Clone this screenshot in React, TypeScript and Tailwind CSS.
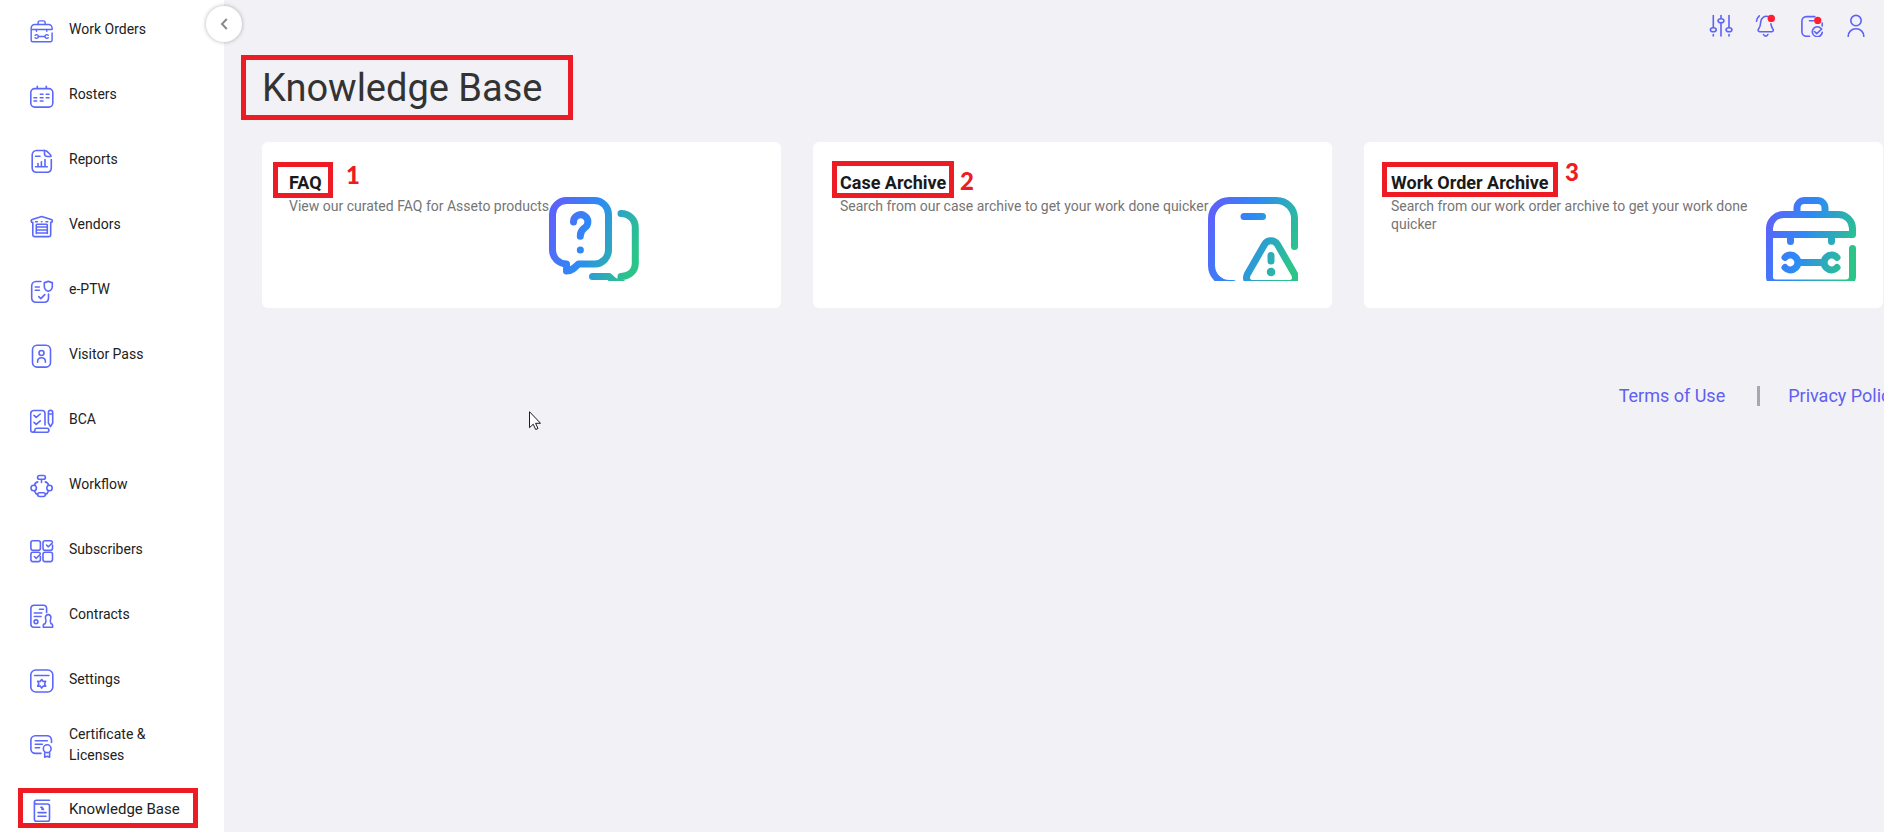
import React from 'react';
import clsx from 'clsx';

type NavItem = {
  label: string;
  icon: React.ReactNode;
  active?: boolean;
};

type ArchiveCard = {
  title: string;
  text: string;
  icon: React.ReactNode;
  step: number;
  boxClass: string;
  stepClass: string;
};

function ToolboxShape() {
  return (
    <>
      <path d="M31 17.5V11a7.5 7.5 0 0 1 7.5-7.5h13A7.5 7.5 0 0 1 59 11v6.5" />
      <path d="M3.5 37.5h83v-6a14 14 0 0 0-14-14h-55a14 14 0 0 0-14 14V80a6 6 0 0 0 6 6H80a6.5 6.5 0 0 0 6.5-6.5v-28" />
      <path d="M24.5 38v6.5M65.5 38v6.5M33 65.5h24" />
      <path d="M19 60.5a7.4 7.4 0 1 1 0 10M71 60.5a7.4 7.4 0 1 0 0 10" />
    </>
  );
}

function NavIcon({ children }: { children: React.ReactNode }) {
  return (
    <svg
      viewBox="0 0 24 24"
      className="w-6 h-6 shrink-0"
      fill="none"
      stroke="#5b68fa"
      strokeWidth={1.6}
      strokeLinecap="round"
      strokeLinejoin="round"
      aria-hidden="true"
    >
      {children}
    </svg>
  );
}

const navItems: NavItem[] = [
  {
    label: 'Work Orders',
    icon: (
      <g transform="translate(0.3 1) scale(0.252)" strokeWidth={5.8}>
        <ToolboxShape />
      </g>
    ),
  },
  {
    label: 'Rosters',
    icon: (
      <>
        <rect x="0.8" y="4.6" width="22" height="18.5" rx="4" />
        <path d="M7.3 2.3v2M16.3 2.3v2M10.3 10.3H13M16.3 10.3H19M4 13.7h2.7M10.3 13.7H13M16.3 13.7H19M4 17h2.7M10.3 17H13" />
      </>
    ),
  },
  {
    label: 'Reports',
    icon: (
      <>
        <path d="M14.5 1.5H6.5A4.500 4.500 0 0 0 2.200 6v13a4.500 4.500 0 0 0 4.300 4.300H17a4.500 4.500 0 0 0 4.300-4.300v-8.500" />
        <path d="M14.5 1.5v3a3 3 0 0 0 3 3H21c0-1-.4-1.600-1-2.200L17 2.400c-.7-.6-1.500-.9-2.500-.9zM5.600 7.300H10M5.600 17.700h11.700M8 17.500V14.600M11.400 17.500v-4.800M15 17.500v-7" />
      </>
    ),
  },
  {
    label: 'Vendors',
    icon: (
      <>
        <path d="M11.7 2.5 2.2 5.600c-.8.300-1.200 1.100-.9 1.900.2.700.8 1 1.500.9V21c0 1 .6 1.600 1.600 1.600h14.700c1 0 1.600-.6 1.600-1.600V8.400c.7.100 1.300-.2 1.500-.9.300-.8-.1-1.600-.9-1.900z" />
        <path d="M5.600 7.800h1.700M11.500 7.800h.4M16 7.800h1.700M6.300 19.400V11c0-.4.300-.7.700-.7h9.600c.4 0 .7.300.7.700v8.400M6.500 13h10.700M6.500 16h10.700M6.500 19h10.700" />
      </>
    ),
  },
  {
    label: 'e-PTW',
    icon: (
      <>
        <path d="M11 2.500H6A4.500 4.500 0 0 0 1.700 7v12A4.500 4.500 0 0 0 6 23.300h8.200a4.500 4.500 0 0 0 4.300-4.300v-4" />
        <path d="M5.300 8h4M5.300 11.300h4M8.800 17.600l2 2 4-4M18.300 2.300c1.300.8 2.500 1.200 4 1.300v3.800c0 2.500-1.700 4-4 4.900-2.300-.9-4-2.400-4-4.900V3.600c1.500-.1 2.700-.5 4-1.300z" />
      </>
    ),
  },
  {
    label: 'Visitor Pass',
    icon: (
      <>
        <rect x="2.5" y="1.3" width="18" height="21.8" rx="4.5" />
        <circle cx="11.5" cy="9" r="2.5" />
        <path d="M7.600 18.300v-.8c0-2.200 1.600-3.800 3.900-3.800s3.900 1.600 3.900 3.800v.8" />
      </>
    ),
  },
  {
    label: 'BCA',
    icon: (
      <>
        <path d="M15 16V4.500a3 3 0 0 0-3-3H4a3.300 3.300 0 0 0-3.300 3.200v16.300c0 1.300.9 2.200 2.100 2.200h14c1.300 0 2.100-.9 2.100-2s-.8-2-2-2H6.500c-1 0-1.600.6-1.600 1.700s-.8 2.200-2 2.200" />
        <path d="m4 6.300 2.200 2L10.300 5M4 13.300l2.200 2 4.100-3.500M18.400 5V3.300c0-1.200.9-1.900 2.100-1.900s2.200.7 2.200 1.900V14l-2.200 3.600-2.100-3.600zm0 0h4.300" />
      </>
    ),
  },
  {
    label: 'Workflow',
    icon: (
      <>
        <rect x="7.6" y="1.5" width="7.8" height="3.8" rx="1.9" />
        <rect x="7.6" y="18.7" width="7.8" height="3.8" rx="1.9" />
        <circle cx="3.7" cy="14" r="2.7" />
        <circle cx="19.5" cy="14" r="2.7" />
        <path d="M11.500 5.500v3M4.500 11.300c.3-2 1.500-3 3.200-3.400M18.500 11.300c-.3-2-1.500-3-3.200-3.400M4.500 16.800c.5 2 1.500 3 3 3.600M18.500 16.800c-.5 2-1.500 3-3 3.600" />
      </>
    ),
  },
  {
    label: 'Subscribers',
    icon: (
      <>
        <rect x="0.9" y="1.8" width="9.5" height="9.4" rx="2" />
        <path d="M22.500 6v3.200c0 1.200-.8 2-2 2H15c-1.200 0-2-.8-2-2V3.800c0-1.200.8-2 2-2h5.500c1 0 1.700.5 1.900 1.400M16.500 6l1.900 1.800 3.800-3.800" />
        <path d="M10.400 17.600v3c0 1.200-.8 2-2 2H2.900c-1.200 0-2-.8-2-2v-5.400c0-1.200.8-2 2-2h5.500c1 0 1.700.5 1.900 1.400M4.400 17.500l1.900 1.800 3.800-3.800" />
        <rect x="13" y="13.2" width="9.5" height="9.4" rx="2" />
      </>
    ),
  },
  {
    label: 'Contracts',
    icon: (
      <>
        <path d="M16.600 8.500V4.300a3 3 0 0 0-3-3H3.900a3 3 0 0 0-3 3v15.900a3 3 0 0 0 3 3h6" />
        <path d="M9.500 5.300h4M4.300 9h7.500M4.300 12.500H11" />
        <circle cx="6" cy="17.8" r="1.9" />
        <path d="M13.300 23.200h9.300v-2c0-.8-.6-1.400-1.600-1.400-.9-1.500-1-3.600-.2-5.500.5-2-.7-3.700-2.600-3.700s-3.200 1.700-2.700 3.700c.8 1.900.7 4-.3 5.500-1.200 0-1.900.6-1.900 1.400z" />
      </>
    ),
  },
  {
    label: 'Settings',
    icon: (
      <>
        <rect x="0.8" y="1" width="22" height="22" rx="5" />
        <path d="M4.600 6.500h14.300" />
        <path d="m11.700 10.500 1.500 2 2.500-.2-1.100 2.500 1.100 2.400-2.500-.1-1.500 2-1.500-2-2.500.1 1.100-2.400-1.100-2.500 2.500.2z" />
      </>
    ),
  },
  {
    label: 'Certificate & Licenses',
    icon: (
      <>
        <path d="M21.500 8.500V6A4.500 4.500 0 0 0 17 1.700H5.300A4.500 4.500 0 0 0 .9 6v9a4.500 4.500 0 0 0 4.400 4.400H11" />
        <path d="M5.300 6.700h12M5.300 10.300h7M5.300 13.800h4.300M14.700 18.700v4.500l2.400-1 2.500 1v-4.500" />
        <circle cx="17.2" cy="14.7" r="3.9" />
      </>
    ),
  },
  {
    label: 'Knowledge Base',
    active: true,
    icon: (
      <>
        <path d="M19.500 1.300H6.500c-1.300 0-2.100.8-2.100 1.900S5.200 5 6.500 5h11c1.200 0 2 .8 2 2v13.200c0 1.200-.8 2-2 2h-11c-1.200 0-2.100-.8-2.100-2V3.200" />
        <path d="M8 13.600h8M8 17.200h8M12 8.300v2.200M10.800 8.300H12l1.500 2.200" />
      </>
    ),
  },
];

function GradientIcon({ id, children }: { id: string; children: React.ReactNode }) {
  return (
    <svg
      viewBox="0 0 90 84"
      className="w-[90px] h-[84px] shrink-0"
      fill="none"
      stroke={`url(#${id})`}
      strokeWidth={7}
      strokeLinecap="round"
      strokeLinejoin="round"
      aria-hidden="true"
    >
      <defs>
        <linearGradient id={id} gradientUnits="userSpaceOnUse" x1="2" y1="28" x2="86" y2="58">
          <stop offset="0" stopColor="#5a64fa" />
          <stop offset="0.42" stopColor="#2d8af6" />
          <stop offset="1" stopColor="#2bc58a" />
        </linearGradient>
      </defs>
      {children}
    </svg>
  );
}

const cards: ArchiveCard[] = [
  {
    title: 'FAQ',
    text: 'View our curated FAQ for Asseto products',
    step: 1,
    boxClass: '-left-4 -top-[7px] w-[60px] h-9',
    stepClass: 'left-[57px] -top-2.5',
    icon: (
      <GradientIcon id="faq-gradient">
        <path d="M17.500 67v7c5 0 8-3 12-7H46a14 14 0 0 0 13.500-14V17.500a14 14 0 0 0-14-14h-28a14 14 0 0 0-14 14V53a14 14 0 0 0 14 14z" />
        <path d="M24.500 25a7.200 7.200 0 1 1 11 6c-3 2-4.200 4-4.200 8.300" />
        <path d="M31.300 53h.1" />
        <path d="M72 16.500c8 0 14.300 6 14.300 14V66c0 8-6 13.500-14.300 13.500v7c-5 0-8-3-12-7H43.500" />
      </GradientIcon>
    ),
  },
  {
    title: 'Case Archive',
    text: 'Search from our case archive to get your work done quicker',
    step: 2,
    boxClass: '-left-2 -top-2 w-[122px] h-[37px]',
    stepClass: 'left-[120px] -top-1',
    icon: (
      <GradientIcon id="case-gradient">
        <path d="M86.500 49.500v-28a18 18 0 0 0-18-18h-47a18 18 0 0 0-18 18v47a18 18 0 0 0 18 18H25" />
        <path d="M36 19.500h18.500M63 58.500V64" />
        <path d="M56.500 47.500 39.500 77c-2.500 5 0 9.500 5 9.500h37c5 0 7.500-4.500 5-9.500l-17-29.500c-3-5-10-5-13 0z" />
        <path d="M63 75h.1" strokeWidth={8.5} />
      </GradientIcon>
    ),
  },
  {
    title: 'Work Order Archive',
    text: 'Search from our work order archive to get your work done quicker',
    step: 3,
    boxClass: '-left-[9px] -top-[7px] w-44 h-[35px]',
    stepClass: 'left-[174px] -top-[13px]',
    icon: (
      <GradientIcon id="work-gradient">
        <ToolboxShape />
      </GradientIcon>
    ),
  },
];

function HeaderButton({ label, children }: { label: string; children: React.ReactNode }) {
  return (
    <button type="button" aria-label={label} className="cursor-pointer">
      <svg
        viewBox="0 0 24 24"
        className="w-6 h-6"
        fill="none"
        stroke="#5d62f8"
        strokeWidth={1.6}
        strokeLinecap="round"
        strokeLinejoin="round"
      >
        {children}
      </svg>
    </button>
  );
}

function Sidebar() {
  return (
    <aside className="relative z-10 w-56 shrink-0 bg-white">
      <nav className="h-full overflow-hidden">
        <ul className="-mt-0.5">
          {navItems.map((item) => (
            <li key={item.label}>
              <a
                href="#"
                className={clsx(
                  'relative flex items-center gap-[15px] h-[65px] pl-[30px] text-[#212121]',
                  item.active ? 'pr-6 text-[15px] leading-[21px]' : 'pr-12 text-sm leading-[21px]'
                )}
              >
                <NavIcon>{item.icon}</NavIcon>
                <span className="pb-0.5">{item.label}</span>
                {item.active && (
                  <span className="absolute left-[18px] top-[10px] w-[180px] h-10 border-5 border-[#ed1c24]" />
                )}
              </a>
            </li>
          ))}
        </ul>
      </nav>

      {/* Collapse toggle */}
      <button
        type="button"
        aria-label="Collapse menu"
        className="absolute -right-[18px] top-1.5 flex items-center justify-center w-9 h-9 rounded-full bg-white shadow-[0_0_4px_rgba(0,0,0,0.3)]"
      >
        <svg viewBox="0 0 8 12" className="w-2 h-3" fill="none" stroke="#8a8a8a" strokeWidth={2}>
          <path d="M6.800 1 2 6l4.800 5" />
        </svg>
      </button>
    </aside>
  );
}

export default function App() {
  return (
    <div className="flex h-screen overflow-hidden bg-[#f2f1f6] font-['Roboto',sans-serif]">
      <Sidebar />

      <main className="relative flex-1 min-w-0 pl-[38px] pr-px">
        <header className="flex items-start justify-end gap-[22px] h-[55px] pt-[13px] pr-3">
          <HeaderButton label="Filters">
            <path d="M4.300 2.500v12M20 2.500v12M4.300 21.500v1.500M20 21.500v1.500M12 2.500v3M12 10.500V23" />
            <ellipse cx="4.3" cy="16.7" rx="2.9" ry="2" />
            <ellipse cx="20" cy="16.7" rx="2.9" ry="2" />
            <ellipse cx="12" cy="7.7" rx="2.9" ry="2" />
          </HeaderButton>
          <HeaderButton label="Notifications">
            <path d="M13 3.500C9.500 2.500 6 5 5.700 9c-.1 3-.4 4.500-2 6.700-1.200 1.600-.5 3 1 3h12c1.600 0 2.200-1.400 1-3-1-1.400-1.600-3-1.800-5M8.500 21.500c.5 1.100 1.200 1.600 2.200 1.600s1.800-.5 2.200-1.600M1.500 8.300c.2-2.200 1.200-4 2.800-5.400" />
            <circle cx="16.3" cy="5.4" r="3.7" fill="#ff1f35" stroke="none" />
          </HeaderButton>
          <HeaderButton label="Tasks">
            <path d="M8.500 23.300H5.300A4.500 4.500 0 0 1 .9 19V8a4.500 4.500 0 0 1 4.400-4.400h8.500M8.500 7.800h4M21.200 10v3" />
            <path d="M20.300 15.700a5 5 0 1 0 1 3.500M13.500 18.500l2.200 2.200 5-4.700" />
            <circle cx="16.7" cy="7.4" r="3.6" fill="#ff1f35" stroke="none" />
          </HeaderButton>
          <HeaderButton label="Profile">
            <circle cx="9" cy="7.6" r="5.2" />
            <path d="M1.200 23.300c.1-4.400 3.300-7.500 7.800-7.500s7.700 3.100 7.800 7.500" />
          </HeaderButton>
        </header>

        <h1 className="relative h-[65px] text-[38px] leading-[67px] text-[#333333]">
          Knowledge Base
          <span className="absolute -left-[21px] top-0 w-[332px] h-[65px] border-5 border-[#ed1c24]" />
        </h1>

        <section className="grid grid-cols-3 gap-8 mt-[22px]">
          {cards.map((card) => (
            <article key={card.title} className="rounded-md bg-white p-[27px]">
              <h2 className="relative h-7 text-lg font-bold leading-7 text-[#1a1a1a]">
                {card.title}
                <span className={clsx('absolute border-5 border-[#ed1c24]', card.boxClass)} />
                <span
                  className={clsx(
                    "absolute font-['Lato',sans-serif] text-2xl font-black text-[#ed1c24]",
                    card.stepClass
                  )}
                >
                  {card.step}
                </span>
              </h2>
              <div className="flex items-start">
                <p className="text-sm leading-[18px] text-[#757575]">{card.text}</p>
                {card.icon}
              </div>
            </article>
          ))}
        </section>

        <footer className="flex items-center justify-end h-6 mt-[76px] -mr-4 text-lg text-[#5f5ff0] whitespace-nowrap">
          <a href="#">Terms of Use</a>
          <span className="w-[3px] h-5 ml-8 mr-7 bg-[#a5a8b0]" />
          <a href="#">Privacy Policy</a>
        </footer>

        {/* Pointer */}
        <svg
          viewBox="0 0 12 19"
          className="absolute left-[305px] top-[411px] w-3 h-[19px]"
          fill="#ffffff"
          stroke="#1a1a2a"
          aria-hidden="true"
        >
          <path d="M.5.700v16l3.700-3.500 2.500 5.300 2.300-1-2.400-5.200h4.900z" />
        </svg>
      </main>
    </div>
  );
}
